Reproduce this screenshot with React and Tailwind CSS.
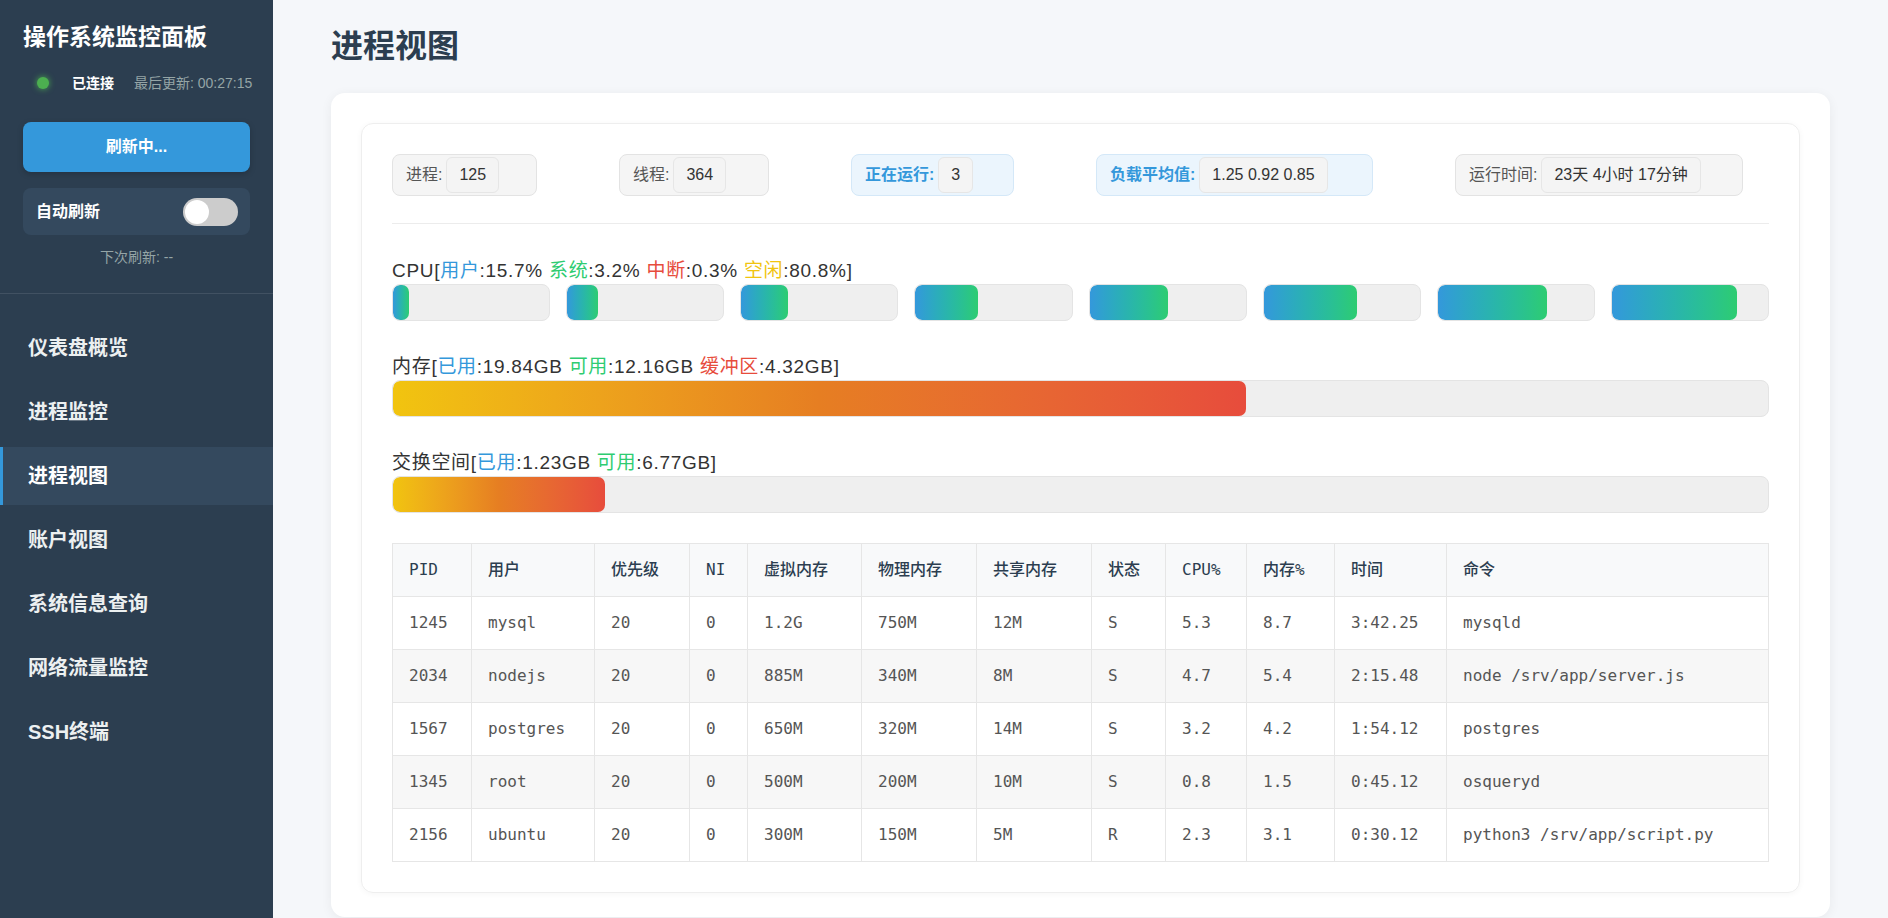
import React from "react";

const navItems = ["仪表盘概览", "进程监控", "进程视图", "账户视图", "系统信息查询", "网络流量监控", "SSH终端"];

const stats = [
  { label: "进程:", value: "125", w: "w-[145px]" },
  { label: "线程:", value: "364", w: "w-[150px]" },
  { label: "正在运行:", value: "3", w: "w-[163px]", hl: true },
  { label: "负载平均值:", value: "1.25 0.92 0.85", w: "w-[277px]", hl: true },
  { label: "运行时间:", value: "23天 4小时 17分钟", w: "w-[288px]" },
];

const cpuFills = [10, 20, 30, 40, 50, 60, 70, 80];

const columns = [
  ["PID", 79],
  ["用户", 123],
  ["优先级", 95],
  ["NI", 58],
  ["虚拟内存", 114],
  ["物理内存", 115],
  ["共享内存", 115],
  ["状态", 74],
  ["CPU%", 81],
  ["内存%", 88],
  ["时间", 112],
  ["命令", 322],
];

const rows = [
  ["1245", "mysql", "20", "0", "1.2G", "750M", "12M", "S", "5.3", "8.7", "3:42.25", "mysqld"],
  ["2034", "nodejs", "20", "0", "885M", "340M", "8M", "S", "4.7", "5.4", "2:15.48", "node /srv/app/server.js"],
  ["1567", "postgres", "20", "0", "650M", "320M", "14M", "S", "3.2", "4.2", "1:54.12", "postgres"],
  ["1345", "root", "20", "0", "500M", "200M", "10M", "S", "0.8", "1.5", "0:45.12", "osqueryd"],
  ["2156", "ubuntu", "20", "0", "300M", "150M", "5M", "R", "2.3", "3.1", "0:30.12", "python3 /srv/app/script.py"],
];

function Sidebar() {
  return (
    <aside className="w-[273px] shrink-0 bg-[#2c3e50] text-[#ecf0f1] min-h-screen">
      <div className="px-[23px] pt-[22px] pb-[26px] border-b border-white/10">
        <h1 className="text-[23px] leading-[30px] font-bold text-white">操作系统监控面板</h1>

        {/* connection status */}
        <div className="mt-[21px] -mr-[20px] h-5 flex items-center pl-[14px] whitespace-nowrap">
          <span className="shrink-0 w-3 h-3 rounded-full bg-[#4caf50] shadow-[0_0_6px_#4caf50]" />
          <span className="shrink-0 ml-[23px] text-[14px] font-bold text-white">已连接</span>
          <span className="shrink-0 ml-[20px] text-[14px] text-[#95a5a6]">最后更新: 00:27:15</span>
        </div>

        <button className="mt-[29px] w-full h-[50px] rounded-[8px] bg-[#3498db] text-white text-[16px] font-bold shadow-[0_2px_6px_rgba(0,0,0,0.2)]">
          刷新中...
        </button>

        <div className="mt-4 h-[47px] rounded-[8px] bg-[#34495e] flex items-center justify-between pl-[13px] pr-[12px]">
          <span className="text-[16px] font-semibold text-white">自动刷新</span>
          <div className="w-[55px] h-[28px] rounded-full bg-[#cccccc] p-[2px] flex items-center">
            <div className="w-6 h-6 rounded-full bg-white" />
          </div>
        </div>

        <div className="mt-[12px] text-center text-[14px] leading-[20px] text-[#95a5a6]">下次刷新: --</div>
      </div>

      <nav className="pt-[25px] flex flex-col gap-[6px]">
        {navItems.map((item) => {
          const active = item === "进程视图";
          return (
            <div
              key={item}
              className={
                active
                  ? "h-[58px] flex items-center pl-[25px] border-l-[3px] border-[#3498db] bg-[#34495e] text-[20px] font-bold text-white"
                  : "h-[58px] flex items-center pl-[28px] text-[20px] font-bold text-[#ecf0f1]"
              }
            >
              {item}
            </div>
          );
        })}
      </nav>
    </aside>
  );
}

function StatBox({ label, value, w, hl }) {
  return (
    <div
      className={
        hl
          ? `${w} h-[42px] flex items-center pl-[13px] rounded-[8px] border border-[#d4e8f8] bg-[#ebf5fd]`
          : `${w} h-[42px] flex items-center pl-[13px] rounded-[8px] border border-[#e3e3e3] bg-[#f5f5f5]`
      }
    >
      <span className={hl ? "text-[16px] font-bold text-[#3498db]" : "text-[16px] text-[#555]"}>{label}</span>
      <span className="ml-[4px] h-[36px] px-[12px] flex items-center rounded-[6px] border border-[#e6e6e6] bg-[#f4f4f4] text-[16px] text-[#333]">
        {value}
      </span>
    </div>
  );
}

function Track({ pct, fill, className = "" }) {
  return (
    <div className={`h-[37px] rounded-[8px] border border-[#e4e4e4] bg-[#efefef] overflow-hidden ${className}`}>
      <div className={`h-full rounded-[7px] ${fill}`} style={{ width: `${pct}%` }} />
    </div>
  );
}

const cpuFill = "bg-linear-to-r from-[#3498db] to-[#2ecc71]";
const memFill = "bg-linear-to-r from-[#f1c40f] via-[#e67e22] to-[#e74c3c]";
const labelCls = "text-[19px] leading-[24px] tracking-[0.7px] text-[#333]";

export default function App() {
  return (
    <div
      className="flex min-h-screen bg-[#f5f7fa]"
      style={{ fontFamily: '"Liberation Sans", "Noto Sans CJK SC", sans-serif' }}
    >
      <Sidebar />

      <main className="flex-1 px-[58px] pt-[27px]">
        <h2 className="text-[32px] leading-[38px] font-bold text-[#2c3e50]">进程视图</h2>

        <div className="mt-[28px] bg-white rounded-[14px] shadow-[0_2px_12px_rgba(0,0,0,0.06)] px-[30px] pt-[30px] pb-[24px]">
          <div className="rounded-[12px] border border-[#eeeeee] shadow-[0_1px_6px_rgba(0,0,0,0.04)] p-[30px]">
            {/* stats */}
            <div className="flex gap-[82px] pb-[27px] border-b border-[#ececec]">
              {stats.map((s) => (
                <StatBox key={s.label} {...s} />
              ))}
            </div>

            {/* CPU */}
            <div className={`mt-[35px] ${labelCls}`}>
              CPU[<span className="text-[#3498db]">用户</span>:15.7% <span className="text-[#2ecc71]">系统</span>:3.2%{" "}
              <span className="text-[#e74c3c]">中断</span>:0.3% <span className="text-[#f1c40f]">空闲</span>:80.8%]
            </div>
            <div className="mt-[1px] grid grid-cols-8 gap-4">
              {cpuFills.map((p) => (
                <Track key={p} pct={p} fill={cpuFill} />
              ))}
            </div>

            {/* memory */}
            <div className={`mt-[34px] ${labelCls}`}>
              内存[<span className="text-[#3498db]">已用</span>:19.84GB <span className="text-[#2ecc71]">可用</span>:12.16GB{" "}
              <span className="text-[#e74c3c]">缓冲区</span>:4.32GB]
            </div>
            <Track pct={62} fill={memFill} className="mt-[1px]" />

            {/* swap */}
            <div className={`mt-[34px] ${labelCls}`}>
              交换空间[<span className="text-[#3498db]">已用</span>:1.23GB <span className="text-[#2ecc71]">可用</span>:6.77GB]
            </div>
            <Track pct={15.4} fill={memFill} className="mt-[1px]" />

            {/* process table */}
            <table
              className="mt-[30px] w-full table-fixed border-collapse border border-[#e3e3e3] text-[16px]"
              style={{ fontFamily: '"DejaVu Sans Mono", "Noto Sans CJK SC", monospace' }}
            >
              <colgroup>
                {columns.map(([name, w]) => (
                  <col key={name} style={{ width: w }} />
                ))}
              </colgroup>
              <thead>
                <tr className="bg-[#f8f9fa]">
                  {columns.map(([name]) => (
                    <th key={name} className="h-[53px] px-4 text-left font-medium text-[#2c3e50] border border-[#e6e6e6]">
                      {name}
                    </th>
                  ))}
                </tr>
              </thead>
              <tbody>
                {rows.map((r, i) => (
                  <tr key={r[0]} className={i % 2 === 1 ? "bg-[#f7f7f7]" : "bg-white"}>
                    {r.map((c, j) => (
                      <td key={j} className="h-[53px] px-4 text-[#555] border border-[#e6e6e6] whitespace-nowrap">
                        {c}
                      </td>
                    ))}
                  </tr>
                ))}
              </tbody>
            </table>
          </div>
        </div>
      </main>
    </div>
  );
}
